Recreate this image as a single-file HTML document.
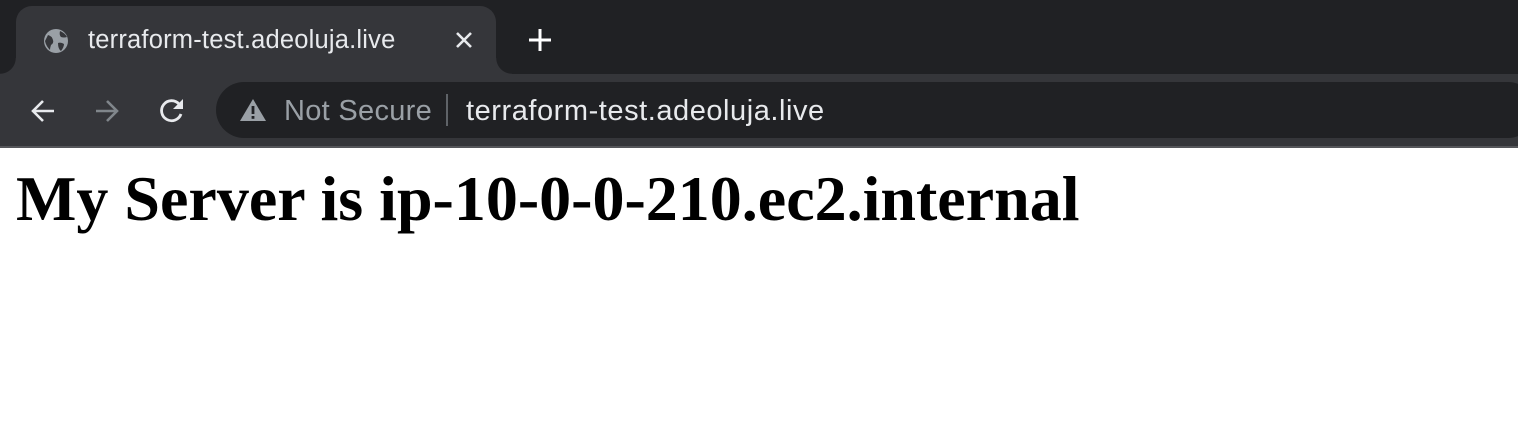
<!DOCTYPE html>
<html><head><style>
body{margin:0;width:1518px;height:438px;overflow:hidden;background:#fff;font-family:"Liberation Sans",sans-serif;position:relative}
.top{position:absolute;left:0;top:0;width:1518px;height:74px;background:#202124}
.tab{position:absolute;left:16px;top:6px;width:480px;height:68px;background:#35363a;border-radius:16px 16px 0 0}
.tab:before,.tab:after{content:"";position:absolute;bottom:0;width:16px;height:16px}
.tab:before{left:-16px;background:radial-gradient(circle at 0 0,#202124 15.5px,#35363a 16px)}
.tab:after{right:-16px;background:radial-gradient(circle at 100% 0,#202124 15.5px,#35363a 16px)}
.title{position:absolute;left:88px;top:26px;color:#e8eaed;font-size:25.5px;letter-spacing:0.2px}
.tool{position:absolute;left:0;top:74px;width:1518px;height:72px;background:#35363a}
.line{position:absolute;left:0;top:146px;width:1518px;height:2px;background:#55565a}
.omni{position:absolute;left:216px;top:82px;width:1320px;height:56px;background:#202124;border-radius:28px}
.t{position:absolute;font-size:29px;letter-spacing:0.55px}
h1{position:absolute;left:16px;top:162px;margin:0;font-family:"Liberation Serif",serif;font-size:64px;font-weight:bold;color:#000;white-space:nowrap}
</style></head><body>
<div class="top"></div>
<div class="tab"></div>
<svg style="position:absolute;left:42px;top:27px" width="28" height="28" viewBox="0 0 28 28"><circle cx="14" cy="14" r="12" fill="#9aa0a6"/><path d="M6 8 Q10 9 11 13 Q12 16 9 18 Q8 21 8 23 Q4 19 3 14 Z M18 4 Q17 8 19 10 Q22 11 25 10 Q23 6 18 4Z M16 16 Q19 15 22 17 Q22 20 19 24 Q16 22 16 16Z" fill="#35363a"/></svg>
<div class="title">terraform-test.adeoluja.live</div>
<svg style="position:absolute;left:454px;top:30px" width="20" height="20"><path d="M3 3L17 17M17 3L3 17" stroke="#e8eaed" stroke-width="2.6"/></svg>
<svg style="position:absolute;left:527px;top:27px" width="26" height="26"><path d="M13 2V24M2 13H24" stroke="#fff" stroke-width="3"/></svg>
<div class="tool"></div>
<div class="line"></div>
<svg style="position:absolute;left:28px;top:96px" width="30" height="30"><path d="M26 15H5M15 5L5 15L15 25" stroke="#e8eaed" stroke-width="2.6" fill="none"/></svg>
<svg style="position:absolute;left:92px;top:96px" width="30" height="30"><path d="M4 15H25M15 5L25 15L15 25" stroke="#80868b" stroke-width="2.6" fill="none"/></svg>
<svg style="position:absolute;left:157px;top:95px" width="32" height="32"><path d="M24 19A10 10 0 1 1 22 9" stroke="#e8eaed" stroke-width="2.8" fill="none"/><path d="M26 4V14H16Z" fill="#e8eaed"/></svg>
<div class="omni"></div>
<svg style="position:absolute;left:239px;top:98px" width="28" height="24"><path d="M14 1L27 23H1Z" fill="#9aa0a6"/><rect x="12.6" y="8" width="2.8" height="8" fill="#202124"/><rect x="12.6" y="18" width="2.8" height="2.8" fill="#202124"/></svg>
<div class="t" style="left:284px;top:95px;color:#9aa0a6;letter-spacing:0.3px">Not Secure</div>
<div style="position:absolute;left:446px;top:94px;width:2px;height:32px;background:#5f6368"></div>
<div class="t" style="left:466px;top:95px;color:#e8eaed">terraform-test.adeoluja.live</div>
<h1>My Server is ip-10-0-0-210.ec2.internal</h1>
</body></html>
